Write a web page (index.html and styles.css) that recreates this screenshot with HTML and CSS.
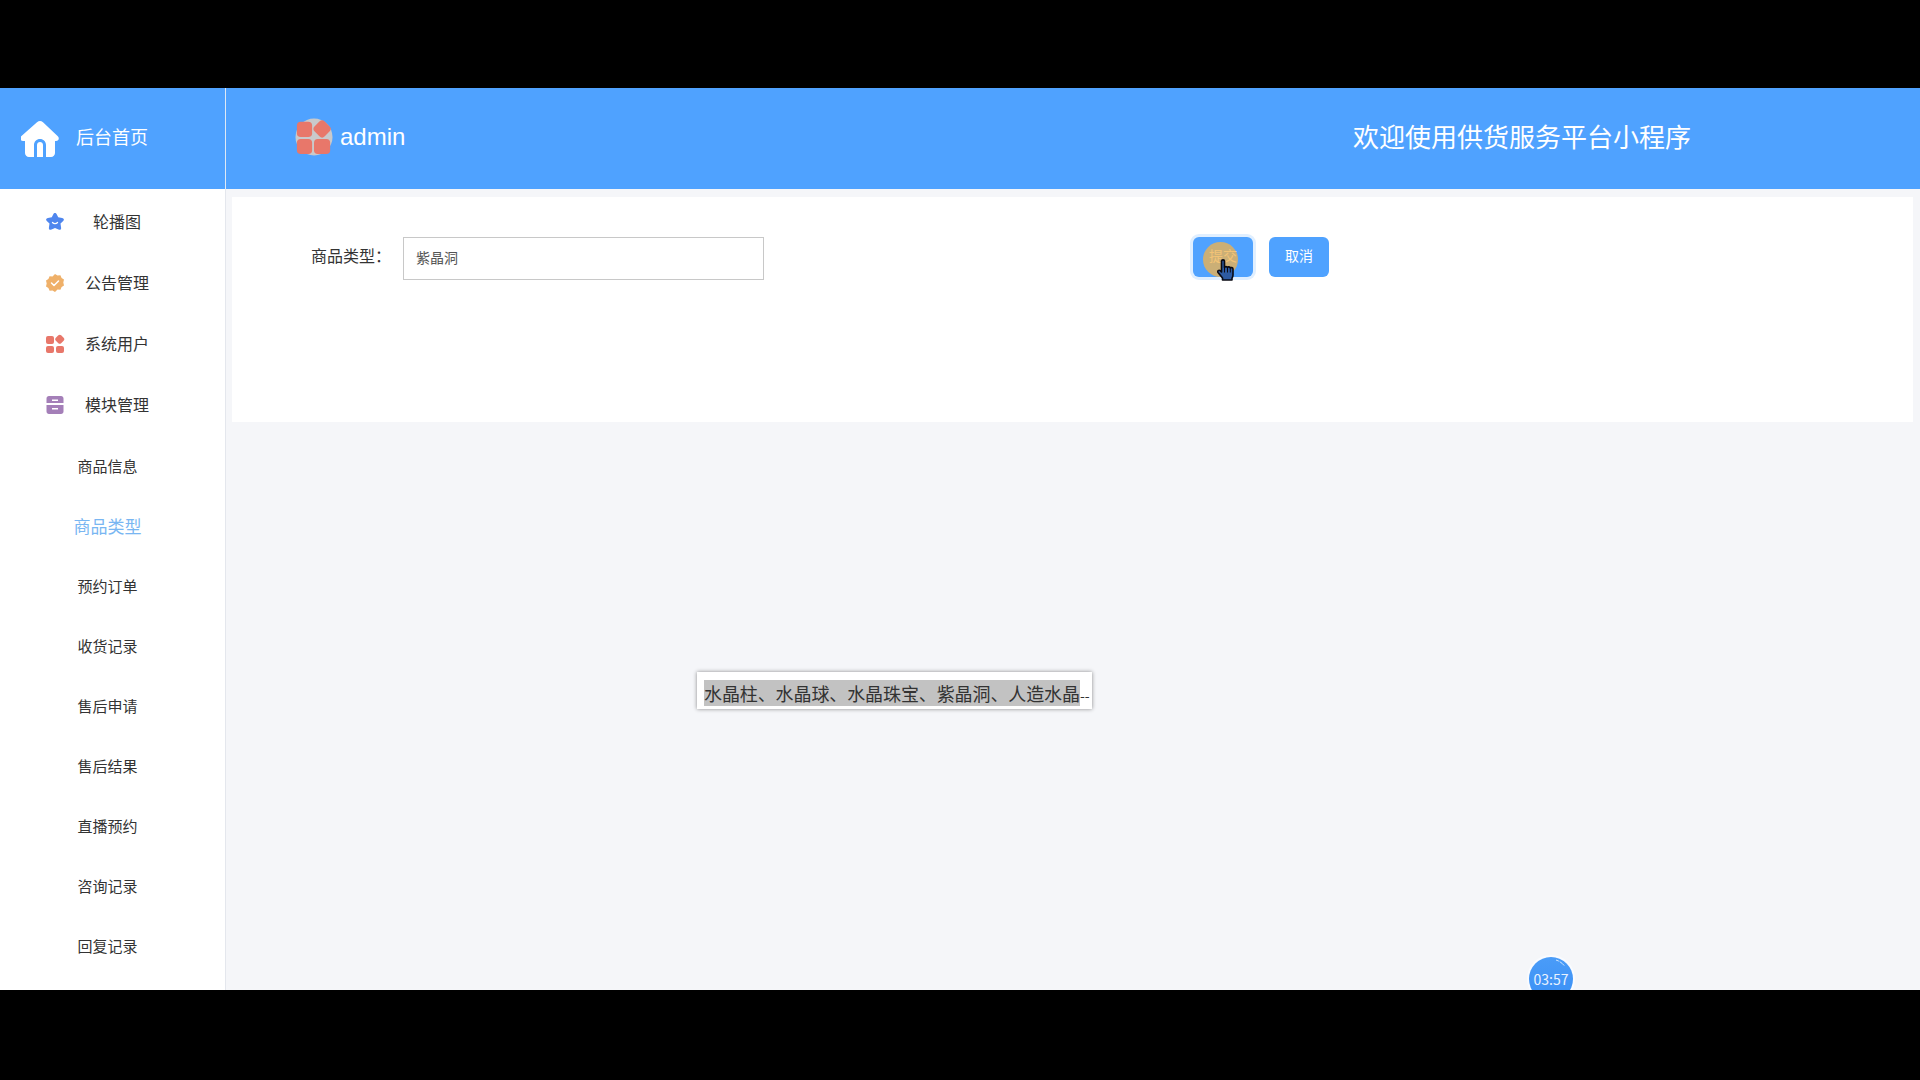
FILE: index.html
```html
<!DOCTYPE html>
<html lang="zh-CN">
<head>
    <meta charset="UTF-8">
    <title>供货服务平台</title>
    <link rel="stylesheet" href="styles.css">
</head>
<body>
    <div class="screen">
        <header class="topbar">
            <div class="brand">
                <svg class="brand-icon" viewBox="0 0 38 36">
                    <path fill="#fff" d="M19 0c1 0 2 .4 3 1.300l14.800 14c1.900 1.800.9 4.700-1.800 4.700H34v12c0 2.300-1.700 4-4 4h-5V24c0-3.400-2.600-6-6-6s-6 2.600-6 6v12H8c-2.300 0-4-1.700-4-4V20H2c-2.700 0-3.700-2.900-1.800-4.700L16 1.300C17 .4 18 0 19 0z"/>
                    <path fill="#fff" d="M16 36V24c0-1.800 1.300-3 3-3s3 1.200 3 3v12z"/>
                </svg>
                <span class="brand-text">后台首页</span>
            </div>
            <div class="user">
                <svg class="avatar" viewBox="0 0 40 40">
                    <circle cx="20" cy="20" r="19.500" fill="#c9c9cb"/>
                    <rect x="2" y="4" width="16" height="16" rx="4" fill="#e8776a"/>
                    <rect x="21" y="4" width="15" height="15" rx="4" fill="#e8776a" transform="rotate(45 28.500 11.500)"/>
                    <rect x="2" y="22" width="16" height="16" rx="4" fill="#e8776a"/>
                    <rect x="20" y="22" width="17" height="16" rx="4" fill="#e8776a"/>
                </svg>
                <span>admin</span>
            </div>
            <div class="welcome">欢迎使用供货服务平台小程序</div>
        </header>

        <div class="body-row">
            <nav class="sidebar">
                <a class="nav-item">
                    <svg class="nav-icon" viewBox="0 0 20 20">
                        <path fill="#4f86ee" d="M10 1c.8 0 1.300.5 1.700 1.300l1.500 3 3.900.6c1.900.3 2.400 1.700 1.100 3l-2.700 2.700.6 4.100c.3 1.800-1 2.700-2.600 1.800L10 16l-3.500 1.500c-1.600.9-2.900 0-2.600-1.800l.6-4.100-2.700-2.700c-1.300-1.300-.8-2.700 1.100-3l3.900-.6 1.500-3C8.700 1.500 9.200 1 10 1z"/>
                        <path fill="none" stroke="#fff" stroke-width="1.300" stroke-linecap="round" d="M7.500 10.500c1.300 1.400 3.700 1.400 5 0"/>
                    </svg>
                    <span>轮播图</span>
                </a>
                <a class="nav-item">
                    <svg class="nav-icon" viewBox="0 0 20 20">
                        <path fill="#efb069" d="M10 1l2.500 1.500 2.900-.3 1.200 2.700 2.400 1.700-.7 2.900.7 2.900-2.400 1.700-1.200 2.700-2.900-.3L10 19l-2.500-1.500-2.900.3-1.200-2.700L1 13.400l.7-2.900L1 7.600l2.400-1.700 1.200-2.700 2.900.3z"/>
                        <path fill="none" stroke="#fff" stroke-width="1.500" stroke-linecap="round" stroke-linejoin="round" d="M6.500 10l2.500 2.500 4.500-4.500"/>
                    </svg>
                    <span>公告管理</span>
                </a>
                <a class="nav-item">
                    <svg class="nav-icon" viewBox="0 0 20 20">
                        <rect x="1" y="2" width="8" height="8" rx="2" fill="#e8776a"/>
                        <rect x="11" y="1.500" width="7.500" height="7.500" rx="2" fill="#e8776a" transform="rotate(45 14.750 5.250)"/>
                        <rect x="1" y="12" width="8" height="7" rx="2" fill="#e8776a"/>
                        <rect x="11" y="12" width="8" height="7" rx="2" fill="#e8776a"/>
                    </svg>
                    <span>系统用户</span>
                </a>
                <a class="nav-item">
                    <svg class="nav-icon" viewBox="0 0 20 20">
                        <path fill="#a47fb8" d="M4 1h12c1.500 0 2.500 1 2.500 2.500V8H1.500V3.500C1.500 2 2.500 1 4 1zM1.500 10h17v6.500c0 1.500-1 2.500-2.500 2.500H4c-1.500 0-2.500-1-2.500-2.500z"/>
                        <path fill="#fff" d="M7 4.500h6v1.500H7zM7 13h6v1.500H7z"/>
                    </svg>
                    <span>模块管理</span>
                </a>
                <ul class="sub-nav">
                    <li>商品信息</li>
                    <li class="active">商品类型</li>
                    <li>预约订单</li>
                    <li>收货记录</li>
                    <li>售后申请</li>
                    <li>售后结果</li>
                    <li>直播预约</li>
                    <li>咨询记录</li>
                    <li>回复记录</li>
                </ul>
            </nav>

            <main class="content">
                <section class="card">
                    <label class="field-label">商品类型：</label>
                    <div class="field-input">紫晶洞</div>
                    <div class="actions">
                        <button class="btn btn-hover">提交</button>
                        <button class="btn">取消</button>
                    </div>
                </section>
            </main>
        </div>

        <!-- things lying over the page -->
        <div class="click-mark"></div>
        <svg class="cursor" viewBox="0 0 17 22">
            <path fill="#2d5aa0" stroke="#0a0a12" stroke-width="1.600" stroke-linejoin="round" d="M4.500 2.200C4.500 .4 7.500 .4 7.500 2.200V8.500c.3-1.200 2.700-1.200 3 0 .3-.9 2.500-.9 2.800.4.500-.7 2.700-.4 2.700 1.100v6c0 1.500-.6 2.500-1 3.200V21H5.500v-2L1 13.500c-1-1.400.9-3 2.200-1.800l1.300 1.300z"/>
            <path fill="none" stroke="#0a0a12" stroke-width="1" d="M7.500 8.500v5M10.500 8.500v5M13.300 8.900v4.600"/>
        </svg>
        <div class="subtitle"><span class="selected">水晶柱、水晶球、水晶珠宝、紫晶洞、人造水晶</span><span class="dashes">--</span></div>
        <div class="timer">
            <svg class="timer-shine" viewBox="0 0 44 44">
                <path fill="none" stroke="#cfe6ff" stroke-width="1" stroke-dasharray="3 1 6 20" d="M27 3c3.500 1 6.500 3.200 8.500 6"/>
            </svg>
            <span class="timer-text">03:57</span>
        </div>
    </div>
</body>
</html>
```

FILE: styles.css
```css
* {
    box-sizing: border-box;
}
html, body {
    height: 100%;
}
body {
    margin: 0;
    padding-top: 88px;
    background-color: #000;
    font-family: "Noto Sans CJK SC", "Liberation Sans", sans-serif;
    overflow: hidden;
}
.screen {
    position: relative;
    height: 902px;
    background-color: #f5f6f9;
    overflow: hidden;
}

/* top bar */
.topbar {
    position: relative;
    display: flex;
    align-items: center;
    height: 101px;
    background-color: #4fa2ff;
    color: #fff;
}
.brand {
    display: flex;
    align-items: center;
    width: 226px;
    height: 100%;
    padding-left: 21px;
    border-right: 1px solid #dfe9f5;
    font-size: 18px;
}
.brand-icon {
    width: 38px;
    height: 36px;
    margin-right: 17px;
}
.brand-text {
    margin-bottom: 5px;
}
.user {
    display: flex;
    align-items: center;
    margin-left: 69px;
    padding-bottom: 4px;
    font-family: "Liberation Sans", sans-serif;
    font-size: 24px;
}
.avatar {
    width: 38px;
    height: 40px;
    margin-right: 7px;
}
.welcome {
    position: absolute;
    left: 1353px;
    top: 28px;
    font-size: 26px;
    line-height: 40px;
}

/* left menu */
.body-row {
    display: flex;
    height: 801px;
}
.sidebar {
    flex: none;
    width: 226px;
    padding-top: 1px;
    background-color: #fff;
    border-right: 1px solid #e4e7ed;
}
.nav-item {
    position: relative;
    display: flex;
    align-items: center;
    justify-content: center;
    height: 61px;
    padding-left: 9px;
    color: #333;
    font-size: 16px;
}
.nav-icon {
    position: absolute;
    left: 45px;
    top: 22px;
    width: 20px;
    height: 20px;
}
.sub-nav {
    margin: 2px 0 0;
    padding: 0;
    list-style: none;
}
.sub-nav li {
    height: 60px;
    padding-right: 10px;
    color: #333;
    font-size: 15px;
    line-height: 60px;
    text-align: center;
}
.sub-nav .active {
    color: #79b6f2;
    font-size: 17px;
}

/* form card */
.content {
    flex: 1;
    padding: 8px 7px 0 6px;
}
.card {
    display: flex;
    align-items: flex-start;
    height: 225px;
    padding: 40px 0 0 79px;
    background-color: #fff;
}
.field-label {
    width: 92px;
    color: #333;
    font-size: 16px;
    line-height: 37px;
    white-space: nowrap;
}
.field-input {
    width: 361px;
    height: 43px;
    padding-left: 12px;
    border: 1px solid #c8c8c8;
    color: #555;
    font-size: 14px;
    line-height: 39px;
}
.actions {
    display: flex;
    gap: 16px;
    margin-left: 429px;
}
.btn {
    width: 60px;
    height: 40px;
    padding: 0 0 4px;
    border: none;
    border-radius: 6px;
    background-color: #4fa2ff;
    color: #fff;
    font-family: inherit;
    font-size: 14px;
}
.btn-hover {
    box-shadow: 0 0 0 3px #e0efff;
}

/* overlays from the screen recording */
.click-mark {
    position: absolute;
    left: 1203px;
    top: 154px;
    width: 35px;
    height: 35px;
    border-radius: 50%;
    background-color: rgba(238, 178, 80, 0.78);
}
.cursor {
    position: absolute;
    left: 1217px;
    top: 171px;
    width: 17px;
    height: 22px;
}
.subtitle {
    position: absolute;
    left: 697px;
    top: 584px;
    width: 395px;
    height: 37px;
    padding: 8px 0 0 7px;
    background-color: #fff;
    box-shadow: 0 0 4px rgba(0, 0, 0, 0.45);
    color: #333;
    font-size: 18px;
    line-height: 26px;
    white-space: nowrap;
}
.selected {
    letter-spacing: -0.1px;
    background-color: #c2c2c2;
}
.dashes {
    font-size: 14px;
}
.timer {
    position: absolute;
    left: 1529px;
    top: 869px;
    width: 44px;
    height: 44px;
    border-radius: 50%;
    background-color: #3f95f7;
    background-image: linear-gradient(#4a9cf8, #3a8ff5);
    box-shadow: 0 0 0 2px #f9fbff;
    color: #e8f2ff;
    font-size: 14px;
    line-height: 44px;
    text-align: center;
}
.timer-shine {
    position: absolute;
    left: 0;
    top: 0;
    width: 44px;
    height: 44px;
}
.timer-text {
    position: relative;
}
```
